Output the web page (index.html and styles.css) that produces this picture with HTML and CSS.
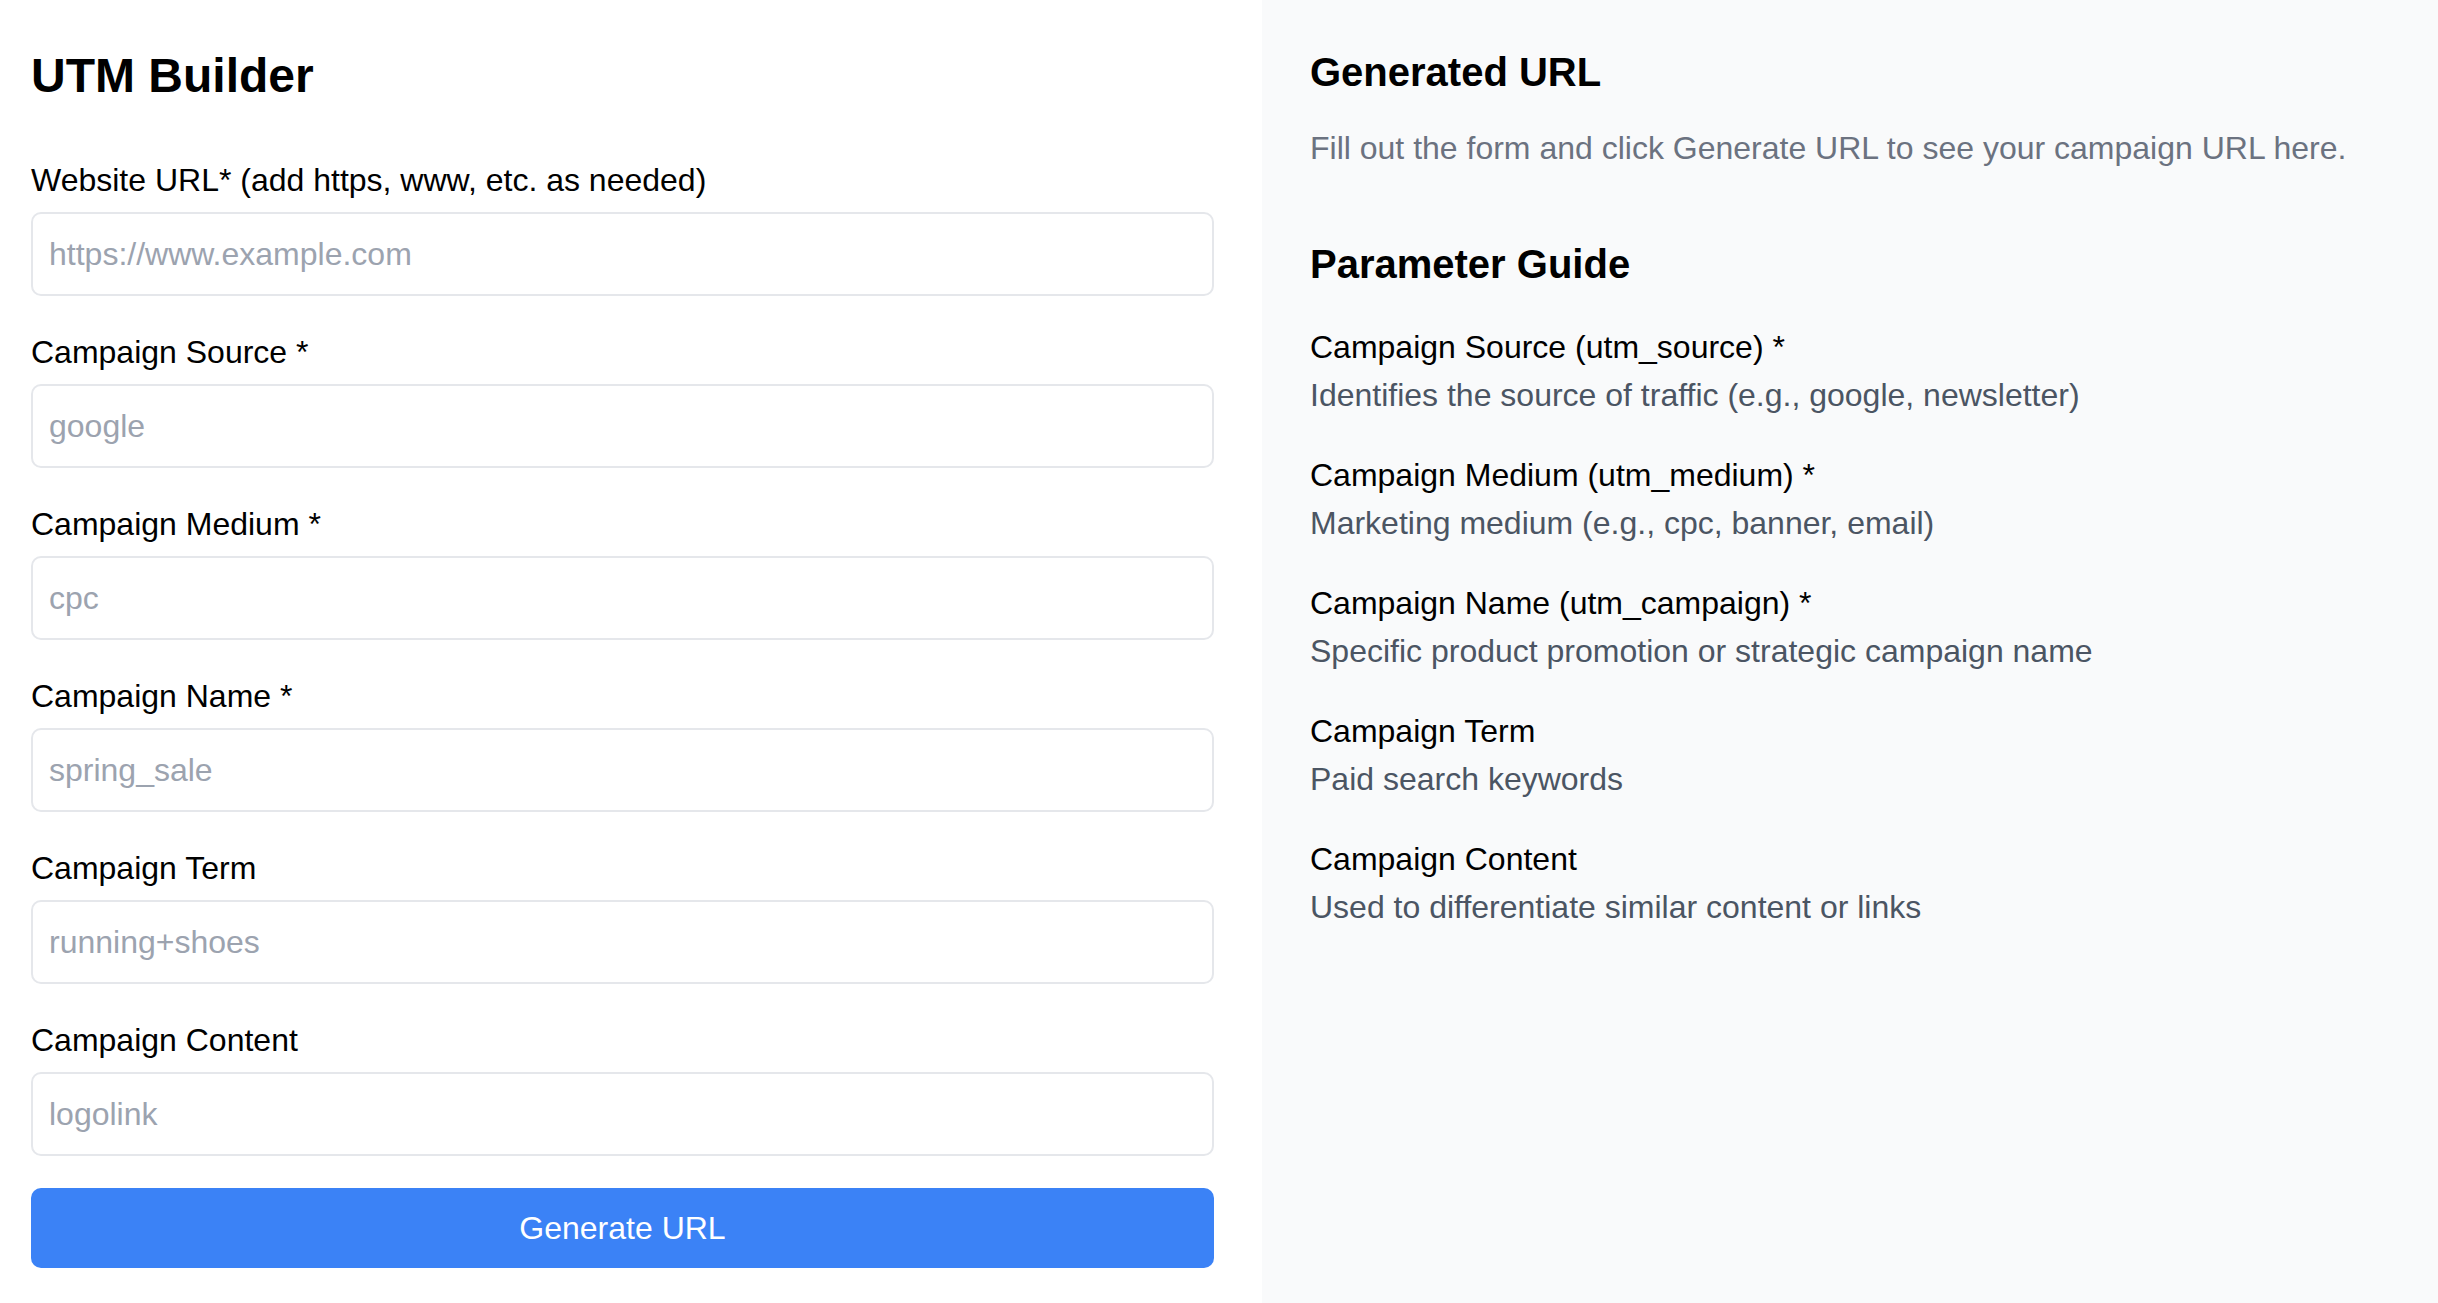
FILE: index.html
```html
<!DOCTYPE html>
<html lang="en">
  <head>
    <meta charset="UTF-8" />
    <meta name="viewport" content="width=device-width, initial-scale=1.0" />
    <title>UTM Builder</title>
    <link rel="stylesheet" href="styles.css">
  </head>
  <body>
    <div class="layout">
      <!-- Form -->
      <div class="builder">
        <h1>UTM Builder</h1>

        <div class="field">
          <label for="url">Website URL* (add https, www, etc. as needed)</label>
          <input id="url" type="text" placeholder="https://www.example.com" />
        </div>

        <div class="field">
          <label for="source">Campaign Source *</label>
          <input id="source" type="text" placeholder="google" />
        </div>

        <div class="field">
          <label for="medium">Campaign Medium *</label>
          <input id="medium" type="text" placeholder="cpc" />
        </div>

        <div class="field">
          <label for="campaign">Campaign Name *</label>
          <input id="campaign" type="text" placeholder="spring_sale" />
        </div>

        <div class="field">
          <label for="term">Campaign Term</label>
          <input id="term" type="text" placeholder="running+shoes" />
        </div>

        <div class="field">
          <label for="content">Campaign Content</label>
          <input id="content" type="text" placeholder="logolink" />
        </div>

        <button class="generate-btn" type="button">Generate URL</button>
      </div>

      <!-- Result + guide -->
      <div class="sidebar">
        <div class="result">
          <h2>Generated URL</h2>
          <p class="result-empty">
            Fill out the form and click Generate URL to see your campaign URL here.
          </p>
        </div>

        <h2>Parameter Guide</h2>
        <ul class="guide-list">
          <li>
            <div class="guide-name">Campaign Source (utm_source) *</div>
            <div class="guide-desc">Identifies the source of traffic (e.g., google, newsletter)</div>
          </li>
          <li>
            <div class="guide-name">Campaign Medium (utm_medium) *</div>
            <div class="guide-desc">Marketing medium (e.g., cpc, banner, email)</div>
          </li>
          <li>
            <div class="guide-name">Campaign Name (utm_campaign) *</div>
            <div class="guide-desc">Specific product promotion or strategic campaign name</div>
          </li>
          <li>
            <div class="guide-name">Campaign Term</div>
            <div class="guide-desc">Paid search keywords</div>
          </li>
          <li>
            <div class="guide-name">Campaign Content</div>
            <div class="guide-desc">Used to differentiate similar content or links</div>
          </li>
        </ul>
      </div>
    </div>
  </body>
</html>
```

FILE: styles.css
```css
body {
  font-family: "Liberation Sans", Arial, sans-serif;
  margin: 0;
  padding: 0;
  color: #000;
  background-color: #fff;
}

.layout {
  display: flex;
  min-height: 100vh;
}

.builder {
  width: 1262px;
  box-sizing: border-box;
  padding: 32px 48px 32px 31px;
}

h1 {
  font-size: 48px;
  line-height: 64px;
  font-weight: 700;
  margin: 12px 0 48px;
}

.field {
  margin-bottom: 32px;
}

.field label {
  display: block;
  font-size: 32px;
  line-height: 48px;
  margin-bottom: 8px;
}

.field input {
  display: block;
  width: 100%;
  box-sizing: border-box;
  font-family: inherit;
  font-size: 32px;
  line-height: 48px;
  padding: 16px 16px;
  border: 2px solid #e5e7eb;
  border-radius: 10px;
  outline: none;
  color: #111;
}

.field input::placeholder {
  color: #9ca3af;
}

.generate-btn {
  display: block;
  width: 100%;
  font-family: inherit;
  font-size: 32px;
  line-height: 48px;
  padding: 16px;
  border: none;
  border-radius: 10px;
  background-color: #3b82f6;
  color: #fff;
}

.sidebar {
  flex: 1;
  background-color: #f9fafb;
  padding: 44px 48px 48px;
}

.sidebar h2 {
  font-size: 40px;
  line-height: 56px;
  font-weight: 700;
  margin: 0 0 31px;
}

.result {
  margin-bottom: 64px;
}

.result h2 {
  margin-bottom: 24px;
}

.result-empty {
  font-size: 32px;
  line-height: 48px;
  color: #6b7280;
  margin: 0;
}

.guide-list {
  list-style: none;
  margin: 0;
  padding: 0;
}

.guide-list li {
  margin-bottom: 32px;
}

.guide-name {
  font-size: 32px;
  line-height: 48px;
}

.guide-desc {
  font-size: 32px;
  line-height: 48px;
  color: #4b5563;
}
```
